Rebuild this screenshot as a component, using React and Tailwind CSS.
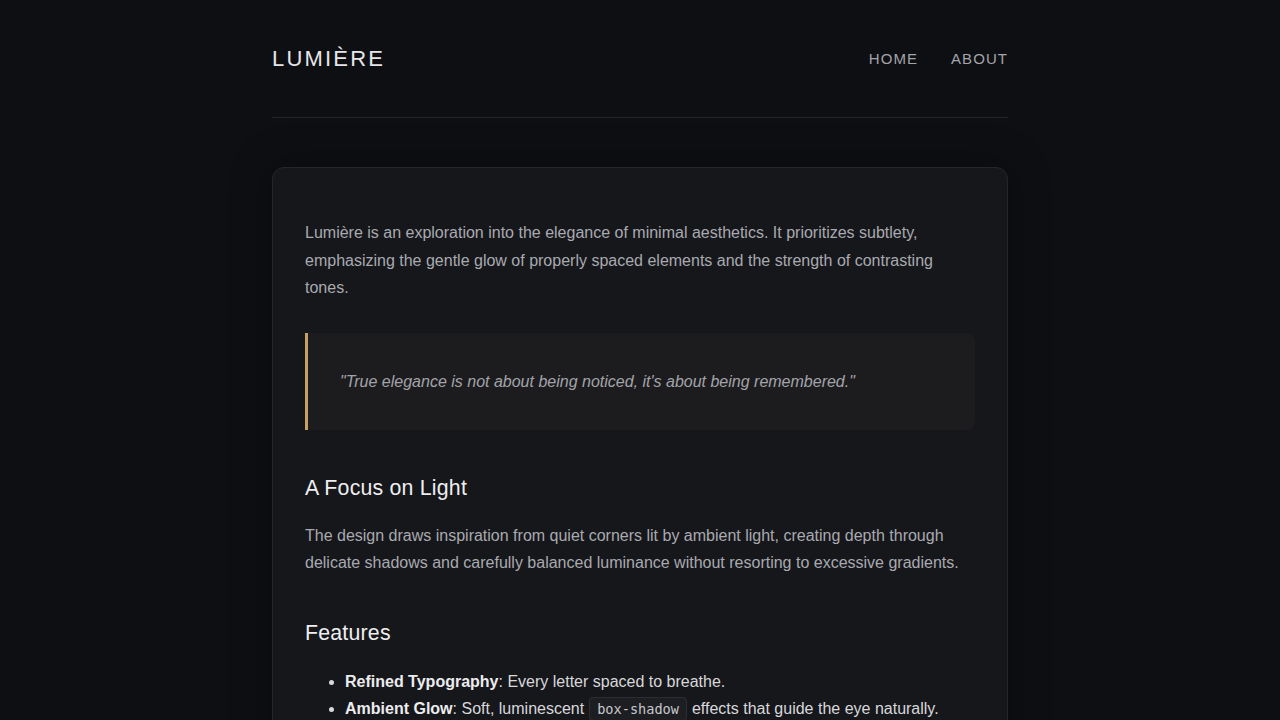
export default function App() {
  return (
    <div className="min-h-screen bg-[#0e0f13] font-['Liberation_Sans',Arial,sans-serif] text-[#a9aab0]">
      <div className="mx-auto w-[736px]">
        {/* Header */}
        <header className="flex h-[118px] items-center justify-between border-b border-[#23242a]">
          <div className="text-[22px] tracking-[0.1em] text-[#e6e6ea]">LUMIÈRE</div>
          <nav className="flex gap-[33px] pt-[2px] text-[15px] tracking-[0.07em] text-[#a3a4aa]">
            <a href="#">HOME</a>
            <a href="#">ABOUT</a>
          </nav>
        </header>

        {/* Card */}
        <main className="mt-[49px] rounded-xl border border-[#25262b] bg-[#16171b] px-8 pt-[51px] pb-10 shadow-[0_0_40px_rgba(0,0,0,0.35)]">
          <p className="text-[16px] leading-[27.5px]">
            Lumière is an exploration into the elegance of minimal aesthetics. It prioritizes subtlety,
            emphasizing the gentle glow of properly spaced elements and the strength of contrasting tones.
          </p>

          <blockquote className="mt-[31px] rounded-r-lg border-l-[3px] border-[#c9a063] bg-[#1c1c1e] py-[35px] pl-8 pr-8">
            <p className="text-[16px] italic leading-[27px] text-[#a3a4aa]">
              "True elegance is not about being noticed, it's about being remembered."
            </p>
          </blockquote>

          <h2 className="mt-[45px] text-[21.3px] leading-[26px] tracking-[0.01em] text-[#eeeef0]">A Focus on Light</h2>
          <p className="mt-[21px] text-[16px] leading-[27.5px]">
            The design draws inspiration from quiet corners lit by ambient light, creating depth through
            delicate shadows and carefully balanced luminance without resorting to excessive gradients.
          </p>

          <h2 className="mt-[43px] text-[21.3px] leading-[26px] tracking-[0.01em] text-[#eeeef0]">Features</h2>
          <ul className="mt-[22px] list-disc pl-10 text-[16px] leading-[27px] text-[#d8d8dc] marker:text-[#d8d8dc]">
            <li>
              <strong className="font-bold text-[#ececef]">Refined Typography</strong>: Every letter spaced to breathe.
            </li>
            <li>
              <strong className="font-bold text-[#ececef]">Ambient Glow</strong>: Soft, luminescent{' '}
              <code className="rounded border border-[#2c2d33] bg-[#1d1e22] px-[7.5px] py-[3px] font-['DejaVu_Sans_Mono',monospace] text-[13.6px] text-[#c8c8cc]">
                box-shadow
              </code>{' '}
              effects that guide the eye naturally.
            </li>
            <li>
              <strong className="font-bold text-[#ececef]">Contrasting Tones</strong>: Deep backgrounds balanced by luminous text.
            </li>
          </ul>
        </main>
        <div className="h-16" />
      </div>
    </div>
  )
}
